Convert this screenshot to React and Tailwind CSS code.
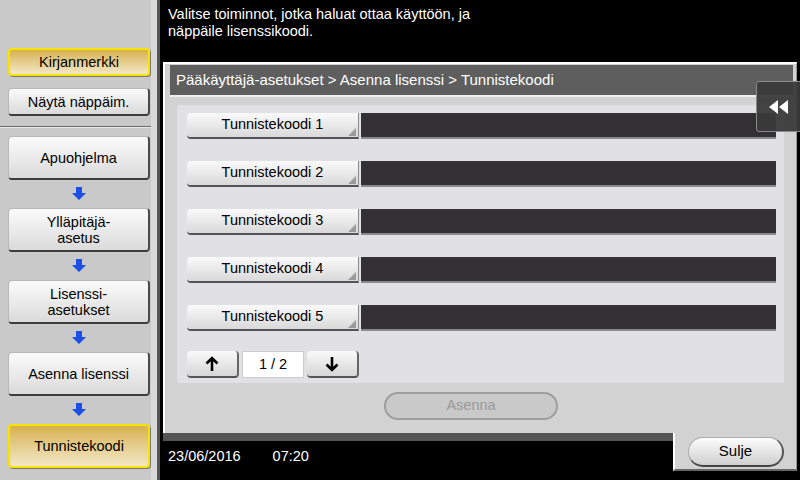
import React from 'react';

const font = { fontFamily: '"Liberation Sans", Arial, sans-serif' };

const BlueArrow = () => (
  <div className="flex justify-center h-[28px] items-center">
    <svg width="14" height="14" viewBox="0 0 14 14">
      <path d="M4 0h6v6h4l-7 7-7-7h4z" fill="#1d4fe6" />
    </svg>
  </div>
);

const SideButton = ({ children, active, tall }) => (
  <div
    className={
      'flex items-center justify-center text-center leading-[16px] text-[14.5px] text-black rounded-[4px] ' +
      (tall ? 'h-[44px] ' : 'h-[28px] ') +
      (active
        ? 'bg-linear-to-b from-[#d6b14c] to-[#f3e8c6] border-2 border-[#f7e200] shadow-[1px_1px_0_#777]'
        : 'bg-linear-to-b from-[#fbfbfb] to-[#dadada] border border-[#b8b8b8] border-r-2 border-b-2 border-r-[#4a4a4a] border-b-[#3c3c3c]')
    }
  >
    {children}
  </div>
);

const CodeRow = ({ n }) => (
  <div className="flex h-[26px] gap-[2px]">
    <div className="relative w-[172px] flex items-center justify-center text-[14.5px] text-black rounded-l-[4px] bg-linear-to-b from-[#fafafa] to-[#d9d9d9] border-b-2 border-r border-b-[#555] border-r-[#888]">
      Tunnistekoodi {n}
      <svg className="absolute right-[2px] bottom-[1px]" width="8" height="8" viewBox="0 0 8 8">
        <path d="M8 0V8H0z" fill="#9a9a9a" />
      </svg>
    </div>
    <div className="flex-1 bg-[#333033] border-b-2 border-b-[#8a8a8a]" />
  </div>
);

const PagerButton = ({ up }) => (
  <div className="w-[52px] h-[27px] flex items-center justify-center rounded-[4px] bg-linear-to-b from-[#fafafa] to-[#d6d6d6] border-b-2 border-r-2 border-b-[#555] border-r-[#666]">
    <svg width="14" height="16" viewBox="0 0 14 16">
      {up ? (
        <path d="M7 15V2M1.5 7.5L7 2l5.5 5.5" stroke="#000" strokeWidth="2.6" fill="none" />
      ) : (
        <path d="M7 1v13M1.5 8.5L7 14l5.5-5.5" stroke="#000" strokeWidth="2.6" fill="none" />
      )}
    </svg>
  </div>
);

export default function App() {
  return (
    <div className="w-[800px] h-[480px] flex bg-black overflow-hidden" style={font}>
      {/* sidebar */}
      <div className="w-[160px] h-full flex bg-[#c9c9c9]">
        <div className="flex-1 flex flex-col">
          <div className="pl-[8px] pr-[1px] pt-[48px] flex flex-col gap-[12px]">
            <SideButton active>Kirjanmerkki</SideButton>
            <SideButton>Näytä näppäim.</SideButton>
          </div>
          <div className="mt-[10px] border-t border-t-[#6a6a6a] border-b border-b-[#e8e8e8]" />
          <div className="pl-[8px] pr-[1px] pt-[8px] flex flex-col">
            <SideButton tall>Apuohjelma</SideButton>
            <BlueArrow />
            <SideButton tall>
              Ylläpitäjä-
              <br />
              asetus
            </SideButton>
            <BlueArrow />
            <SideButton tall>
              Lisenssi-
              <br />
              asetukset
            </SideButton>
            <BlueArrow />
            <SideButton tall>Asenna lisenssi</SideButton>
            <BlueArrow />
            <SideButton tall active>
              Tunnistekoodi
            </SideButton>
          </div>
        </div>
        <div className="w-[9px] bg-[#dadada] border-r-[3px] border-r-[#555]" />
      </div>

      {/* right */}
      <div className="flex-1 flex flex-col relative">
        <div className="h-[62px] px-[8px] pt-[6px] text-white text-[14.5px] leading-[17px]">
          Valitse toiminnot, jotka haluat ottaa käyttöön, ja
          <br />
          näppäile lisenssikoodi.
        </div>

        <div className="h-[371px] mx-[3px] bg-[#d2d2d2] border-l-2 border-t-2 border-white border-r border-r-[#999] flex flex-col">
          <div className="mt-[1px] ml-[5px] mr-[3px] h-[32px] bg-[#5e5e5e] border-b-2 border-b-[#f0f0f0] text-white text-[15px] flex items-center px-[6px]">
            Pääkäyttäjä-asetukset &gt; Asenna lisenssi &gt; Tunnistekoodi
          </div>
          <div className="mt-[8px] ml-[12px] mr-[12px] h-[278px] bg-[#e1e0e3] px-[10px] pt-[8px] pr-[8px] flex flex-col">
            <div className="flex flex-col gap-[22px]">
              <CodeRow n={1} />
              <CodeRow n={2} />
              <CodeRow n={3} />
              <CodeRow n={4} />
              <CodeRow n={5} />
            </div>
            <div className="mt-[20px] flex items-center gap-[3px]">
              <PagerButton up />
              <div className="w-[62px] h-[27px] bg-white flex items-center justify-center text-[14.5px] text-black border border-[#ccc]">
                1 / 2
              </div>
              <PagerButton />
            </div>
          </div>
          <div className="mt-[9px] ml-[219px] w-[174px] h-[28px] rounded-full bg-[#c9c9c9] border-2 border-[#9e9e9e] flex items-center justify-center text-[14.5px] text-[#999]">
            Asenna
          </div>
        </div>

        <div className="flex-1 flex">
          <div className="flex-1 ml-[3px] border-t-[8px] border-t-[#555] bg-black text-white text-[14.5px] flex items-start pt-[5px] pl-[5px] gap-[32px]">
            <span>23/06/2016</span>
            <span>07:20</span>
          </div>
          <div className="w-[124px] h-[38px] mr-[3px] bg-[#d2d2d2] border-l-2 border-l-white border-b-2 border-b-[#666] border-r border-r-[#999] flex items-start pl-[13px] pt-[4px]">
            <div className="w-[96px] h-[30px] rounded-full bg-linear-to-b from-[#fdfdfd] to-[#cfcfcf] border border-[#aaa] border-b-2 border-r-2 border-b-[#444] border-r-[#555] flex items-center justify-center text-[15px] text-black">
              Sulje
            </div>
          </div>
        </div>

        {/* collapse tab */}
        <div className="absolute left-[596px] top-[81px] w-[46px] h-[51px] bg-[#3b3a3b]/95 border border-[#8a8a8a] rounded-l-[3px] flex items-center justify-center">
          <svg width="22" height="14" viewBox="0 0 22 14">
            <path d="M10 0L1 7l9 7z M20 0l-9 7 9 7z" fill="#fff" />
          </svg>
        </div>
      </div>
    </div>
  );
}
